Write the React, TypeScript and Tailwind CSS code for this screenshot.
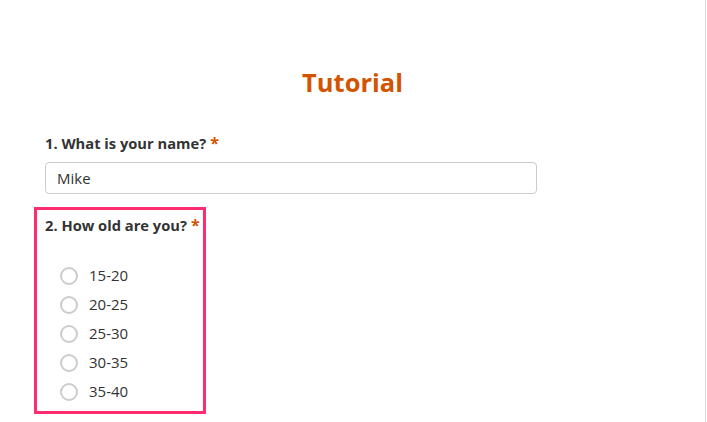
const ages = ["15-20", "20-25", "25-30", "30-35", "35-40"];

function Asterisk() {
  return <span className="ml-[4px] text-[16px] text-[#d35400]">*</span>;
}

export default function App() {
  return (
    <div
      className="flex min-h-[422px] bg-white text-[#333]"
      style={{ fontFamily: '"Open Sans", "Liberation Sans", sans-serif' }}
    >
      <div className="w-[706px] border-r border-[#dcdcdc]">
        <h1 className="pt-[64px] text-center text-[25.5px] font-bold leading-[36px] text-[#d35400]">
          Tutorial
        </h1>

        <div className="px-[45px]">
          {/* Question 1 */}
          <div className="mt-[33px]">
            <label className="block whitespace-nowrap text-[14.7px] font-bold leading-[20px]">
              1. What is your name?
              <Asterisk />
            </label>
            <div className="mt-[9px] flex h-[32px] w-[492px] items-center rounded-[4px] border border-[#ccc] px-[11px] text-[15px]">
              Mike
            </div>
          </div>

          {/* Question 2 (highlighted) */}
          <div className="-ml-[11px] mt-[13px] w-[172px] border-[3px] border-[#ff2d6f] px-[8px] pt-[5px] pb-[5px]">
            <div className="whitespace-nowrap text-[14.7px] font-bold leading-[20px]">
              2. How old are you?
              <Asterisk />
            </div>
            <div className="mt-[26px] flex flex-col">
              {ages.map((age) => (
                <div key={age} className="flex h-[29px] items-center pl-[15px]">
                  <span className="h-[18px] w-[18px] rounded-full border-2 border-[#ccc]" />
                  <span className="ml-[11px] text-[15px]">{age}</span>
                </div>
              ))}
            </div>
          </div>
        </div>
      </div>
    </div>
  );
}
